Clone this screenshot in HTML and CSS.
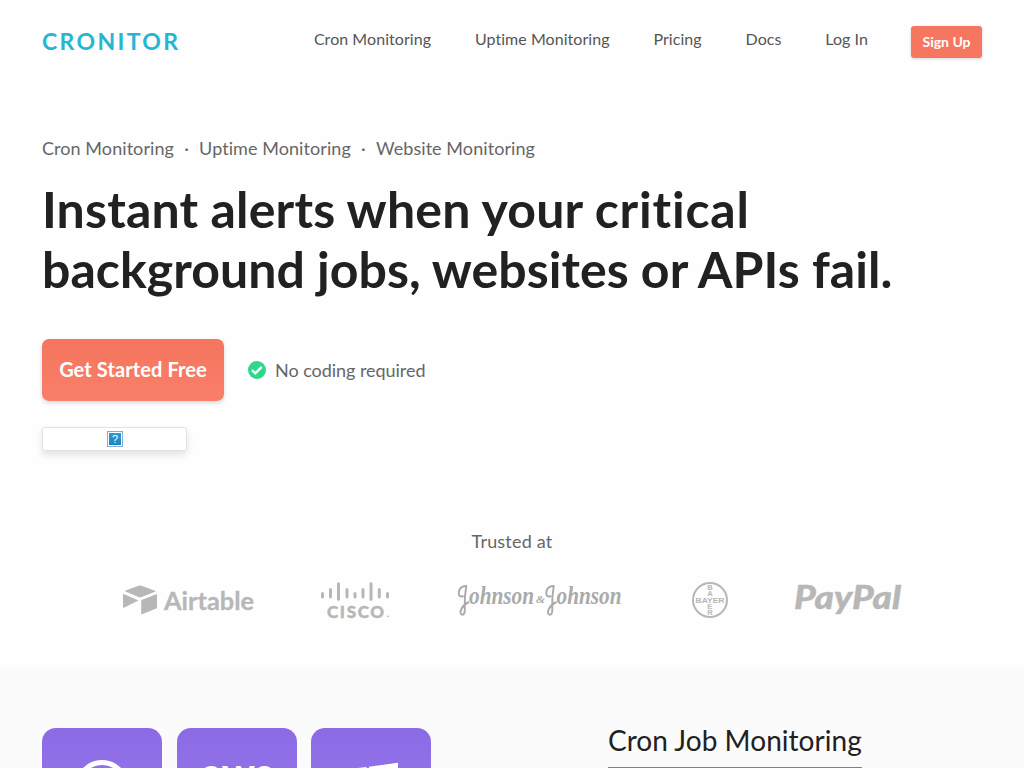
FILE: index.html
```html
<!DOCTYPE html>
<html lang="en">
<head>
<meta charset="utf-8">
<title>Cronitor</title>
<link rel="stylesheet" href="styles.css">
</head>
<body>
<header class="header">
  <a class="brand">CRONITOR</a>
  <nav class="nav">
    <a>Cron Monitoring</a><a>Uptime Monitoring</a><a>Pricing</a><a>Docs</a><a>Log In</a>
  </nav>
  <a class="signup">Sign Up</a>
</header>
<main>
  <section class="hero">
    <p class="topics"><span>Cron Monitoring</span><span>·</span><span>Uptime Monitoring</span><span>·</span><span>Website Monitoring</span></p>
    <h1><span class="lead">Instant alerts when your <span class="loose">critical</span></span><br>background jobs, websites or APIs fail.</h1>
    <div class="actions">
      <a class="cta">Get Started Free</a>
      <svg class="check" viewBox="0 0 18 18"><circle cx="9" cy="9" r="9" fill="#2fd78a"/><path d="M4 9.2 7.3 12.3 13.8 5.8" fill="none" stroke="#fff" stroke-width="2.4"/></svg>
      <span class="note">No coding required</span>
    </div>
    <div class="badge-card">
      <svg viewBox="0 0 16 16" width="16" height="16"><defs><linearGradient id="q" x2="0" y2="1"><stop stop-color="#2b9cd8"/><stop offset="1" stop-color="#2380ba"/></linearGradient></defs><rect x=".5" y=".5" width="15" height="15" fill="#fff" stroke="#84abd3"/><rect x="2" y="2" width="12" height="12" fill="url(#q)"/><text x="8" y="12" text-anchor="middle" class="question">?</text></svg>
    </div>
  </section>
  <section class="trusted">
    <h2>Trusted at</h2>
    <div class="logos">
      <svg class="airtable" width="132" height="40" viewBox="0 0 132 40">
        <path d="M2.5 10.5 15.5 5.8q1.5-.5 3 0L32 10.7q1 .6 0 1L18.5 17q-1.5.5-3 0L2.5 11.5q-.8-.5 0-1zM.8 14 15.5 20.5.8 27.8q-.8.3-.8-.7V14.5q0-.8.8-.5zM18.5 20 33.2 14.3q.8-.3.8.5V27.5q0 .7-.7 1L19 34.2q-.8.2-.8-.6V20.7q0-.5.3-.7z"/>
        <text x="41" y="30.2" textLength="90" lengthAdjust="spacingAndGlyphs">Airtable</text>
      </svg>
      <svg class="cisco" width="70" height="40" viewBox="0 0 70 40">
        <path d="M1.5 13.5v3.5M9.5 9.5v7.5M17.5 3.8v15.4M26 9.5v7.5M34 13.5v3.5M42 9.5v7.5M50 3.8v15.4M58.3 9.5v7.5M66.5 13.5v3.5"/>
        <text x="6" y="37.5" textLength="57">CISCO</text><text class="tm" x="66" y="37">.</text>
      </svg>
      <svg class="johnson" width="165" height="40" viewBox="0 0 165 40">
        <g fill="none"><path d="M9 6Q2 5.5.8 12q-.5 6 4.7 4M8.3 5.8Q6.2 17 6.8 29q.2 6-2.7 5.7-3-1-.5-6.2Q6 24 11 22"/><path d="M96.5 6Q89.5 5.5 88.3 12q-.5 6 4.7 4M95.8 5.8Q93.7 17 94.3 29q.2 6-2.7 5.7-3-1-.5-6.2Q93.5 24 98.5 22"/></g>
        <text x="11" y="23.8" textLength="65" lengthAdjust="spacingAndGlyphs">ohnson</text><text class="amp" x="78" y="23" textLength="9" lengthAdjust="spacingAndGlyphs">&amp;</text><text x="98.5" y="23.8" textLength="65" lengthAdjust="spacingAndGlyphs">ohnson</text>
      </svg>
      <svg class="bayer" width="36" height="40" viewBox="0 0 36 40"><circle cx="18" cy="20" r="17" fill="none"/>
        <text x="3.5" y="22.6" textLength="29" lengthAdjust="spacingAndGlyphs">BAYER</text><text x="15.3" y="10">B</text><text x="15.3" y="16.4">A</text><text x="15.3" y="29">E</text><text x="15.3" y="35.3">R</text>
      </svg>
      <svg class="paypal" width="108" height="40" viewBox="0 0 108 40"><text x="-1" y="28.9" textLength="107" lengthAdjust="spacingAndGlyphs">PayPal</text></svg>
    </div>
  </section>
  <section class="features">
    <div class="tiles">
      <div class="tile"><svg viewBox="0 0 120 120"><circle cx="60" cy="59" r="24.5" fill="none" stroke="#fff" stroke-width="5"/></svg></div>
      <div class="tile"><svg viewBox="0 0 120 120"><text class="aws" x="24" y="61" textLength="72" lengthAdjust="spacingAndGlyphs">aws</text></svg></div>
      <div class="tile"><svg viewBox="0 0 120 120"><path fill="#fff" d="M30 41.8 55.5 39v25H30zM58 38.7 87 34.8V64H58z"/></svg></div>
    </div>
    <div class="feature-copy"><h2>Cron Job Monitoring</h2></div>
  </section>
</main>
</body>
</html>
```
FILE: styles.css
```css
* { box-sizing: border-box; }
body { margin: 0; height: 768px; overflow: hidden; background: #fefefe; color: #666; font-family: Lato, sans-serif; font-variant-ligatures: none; }
h1, h2, p { margin: 0; }
.header { height: 84px; padding: 26px 42px 0; display: flex; align-items: flex-start; }
.brand { color: #26b6d4; font-size: 23px; line-height: 31px; font-weight: 700; letter-spacing: 2.35px; }
.nav { display: flex; gap: 43.9px; margin-left: auto; font-size: 16px; line-height: 26px; color: #555; letter-spacing: .05px; }
.signup { margin-left: 43px; width: 71px; height: 32px; line-height: 32px; text-align: center; font-size: 14px; font-weight: 700; color: #fff; background: #f7765f; border-radius: 3px; box-shadow: 0 1px 3px rgba(50,50,93,.2); }
.hero { height: 436px; padding: 51px 42px 0; }
.topics { display: flex; gap: 10.2px; font-size: 18px; line-height: 27px; letter-spacing: .07px; }
h1 { margin-top: 17px; color: #212121; font-size: 50px; line-height: 60px; font-weight: 700; white-space: nowrap; letter-spacing: .04px; }
.lead { letter-spacing: .17px; }
.loose { letter-spacing: .8px; }
.actions { display: flex; align-items: center; margin-top: 40px; }
.cta { width: 182px; height: 62px; line-height: 61px; text-align: center; color: #fff; font-size: 20px; font-weight: 700; letter-spacing: .1px; border-radius: 7px; background: linear-gradient(#f5755e, #f97f69); box-shadow: 0 2px 4px rgba(50,50,93,.18); }
.check { width: 18px; height: 18px; margin-left: 24px; }
.note { margin-left: 9px; font-size: 18px; letter-spacing: -.04px; }
.badge-card { width: 145px; height: 24px; margin-top: 26px; display: flex; align-items: center; justify-content: center; background: #fff; border: 1px solid #e2e2e2; border-radius: 3px; box-shadow: 0 4px 7px rgba(50,50,93,.13); }
.question { fill: #fff; font: 11px "Liberation Sans", sans-serif; }
.trusted { height: 148px; padding-top: 8px; }
.trusted h2 { text-align: center; font-size: 18px; line-height: 27px; font-weight: 400; letter-spacing: .2px; }
.logos { display: flex; margin: 25px 0 0 123px; fill: #b7b7b7; }
.logos svg { flex: none; overflow: visible; }
.airtable text { font: 700 25px Lato, sans-serif; stroke: #b7b7b7; stroke-width: .3; }
.cisco { margin-left: 66px; }
.cisco path { stroke: #b7b7b7; stroke-width: 3; stroke-linecap: round; }
.cisco text { font: 900 17px Lato, sans-serif; stroke: #b7b7b7; stroke-width: .4; }
.cisco .tm { font-size: 7px; }
.johnson { margin-left: 67px; fill: #aaa; }
.johnson path { stroke: #aaa; stroke-width: 1.9; }
.johnson text { font: italic 700 25px "Liberation Serif", serif; }
.johnson .amp { font-size: 11px; }
.bayer { margin-left: 69px; }
.bayer circle { stroke: #b7b7b7; stroke-width: 2; }
.bayer text { font: 700 7.6px "Liberation Sans", sans-serif; }
.paypal { margin-left: 67px; }
.paypal text { font: italic 900 32px Lato, sans-serif; stroke: #b7b7b7; stroke-width: .4; }
.features { height: 100px; overflow: hidden; padding: 60px 42px 0; background: #fbfbfb; display: flex; }
.tiles { display: flex; gap: 14.5px; width: 566px; }
.tile { width: 120px; height: 120px; border-radius: 14px; background: linear-gradient(#8b6be4, #9b7cf0); }
.tile svg { display: block; width: 120px; height: 120px; }
.aws { fill: #fff; font: 700 44px Lato, sans-serif; }
.feature-copy h2 { height: 40px; color: #212121; font-size: 28px; line-height: 24px; font-weight: 400; letter-spacing: .05px; border-bottom: 1px solid #8b6be4; }
```
